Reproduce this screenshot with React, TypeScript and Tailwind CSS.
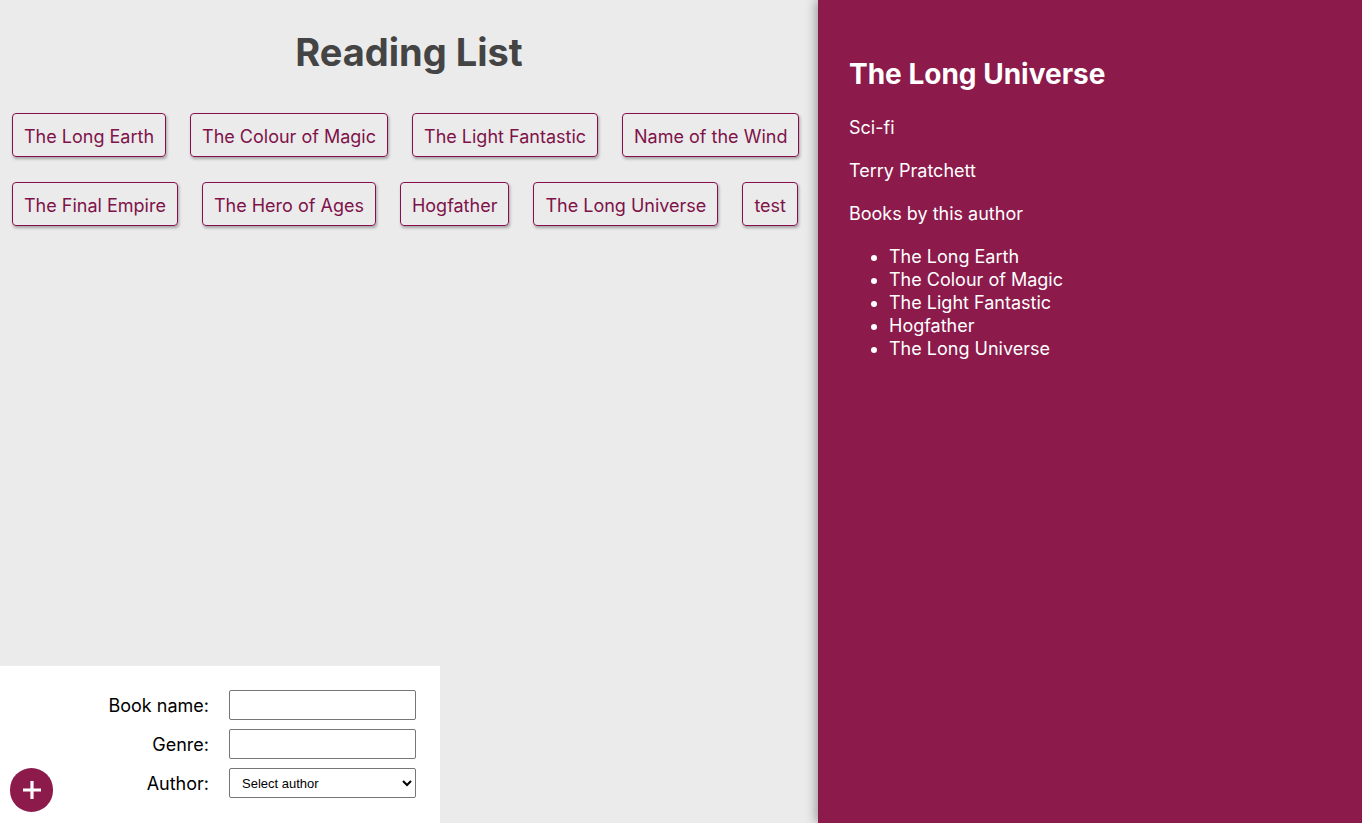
import { useState } from "react"

const books = [
  "The Long Earth",
  "The Colour of Magic",
  "The Light Fantastic",
  "Name of the Wind",
  "The Final Empire",
  "The Hero of Ages",
  "Hogfather",
  "The Long Universe",
  "test",
]

const byAuthor = ["The Long Earth", "The Colour of Magic", "The Light Fantastic", "Hogfather", "The Long Universe"]

export default function App() {
  const [selected, setSelected] = useState("The Long Universe")
  return (
    <div className="w-full h-[823px] flex bg-[#ebebeb] font-['Inter',sans-serif] overflow-hidden">
      <div className="w-[818px] h-full flex flex-col relative">
        <h1 className="text-center text-[38px] font-bold text-[#444] pt-[28px] leading-[48px]">Reading List</h1>
        <ul className="flex flex-wrap gap-x-[24px] gap-y-[25px] px-[12px] pt-[37px]">
          {books.map((b) => (
            <li
              key={b}
              onClick={() => setSelected(b)}
              className="border border-[#880e4f] rounded-[4px] px-[11px] pt-[12px] pb-[8px] text-[18px] leading-[22px] text-[#7e1249] shadow-[1px_2px_3px_rgba(0,0,0,0.3)] cursor-pointer"
            >
              {b}
            </li>
          ))}
        </ul>
        <form className="mt-auto w-[440px] bg-white pt-[24px] pb-[25px] relative">
          <div className="flex flex-col gap-[9px]">
            {[["Book name:", "input"], ["Genre:", "input"], ["Author:", "select"]].map(([label, kind]) => (
              <div key={label} className="flex items-center">
                <label className="w-[229px] text-right pr-[20px] text-[18px] text-black">{label}</label>
                {kind === "input" ? (
                  <input className="w-[187px] h-[30px] border border-[#767676] rounded-[2px] bg-white" />
                ) : (
                  <select className="w-[187px] h-[30px] border border-[#767676] rounded-[2px] bg-white text-[13px] font-['Liberation_Sans',sans-serif] px-[8px] text-black">
                    <option>Select author</option>
                  </select>
                )}
              </div>
            ))}
          </div>
          <button
            type="button"
            className="absolute left-[10px] bottom-[11px] w-[43px] h-[44px] rounded-full bg-[#8c1a4b] text-white flex items-center justify-center"
          >
            <svg width="22" height="22" viewBox="0 0 22 22">
              <path d="M11 2v18M2 11h18" stroke="white" strokeWidth="3.2" strokeLinecap="butt" />
            </svg>
          </button>
        </form>
      </div>
      <div className="flex-1 h-full bg-[#8c1a4b] text-white px-[31px] pt-[54px] shadow-[-2px_0_10px_rgba(0,0,0,0.35)] z-10">
        <h2 className="text-[28px] font-bold leading-[40px]">{selected}</h2>
        <p className="text-[18px] leading-[23px] mt-[22px]">Sci-fi</p>
        <p className="text-[18px] leading-[23px] mt-[20px]">Terry Pratchett</p>
        <p className="text-[18px] leading-[23px] mt-[20px]">Books by this author</p>
        <ul className="list-disc pl-[40px] mt-[20px] text-[18px] leading-[23px]">
          {byAuthor.map((b) => (
            <li key={b}>{b}</li>
          ))}
        </ul>
      </div>
    </div>
  )
}
